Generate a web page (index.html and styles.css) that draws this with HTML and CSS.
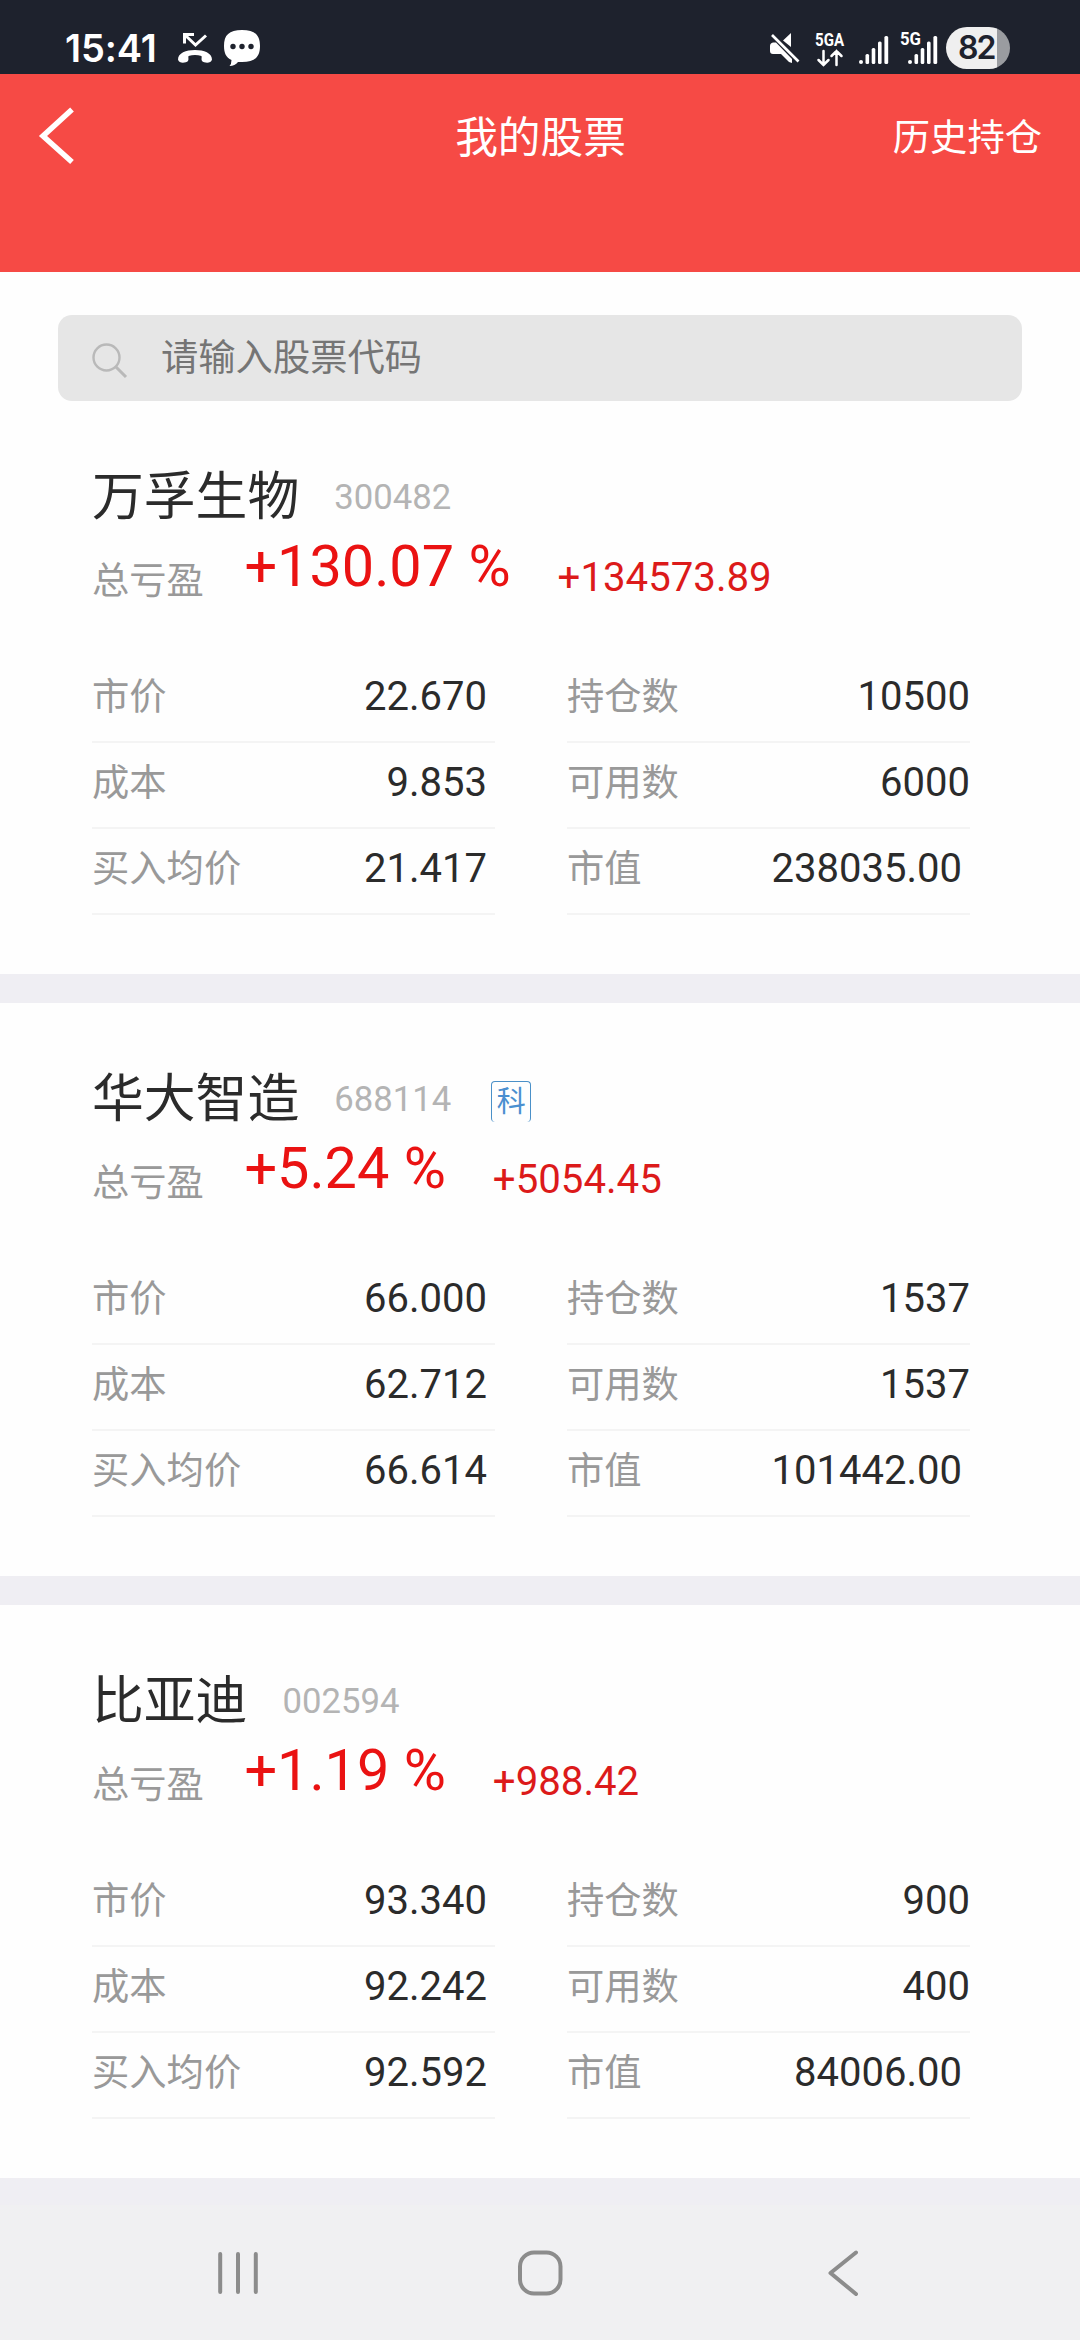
FILE: index.html
```html
<!DOCTYPE html>
<html lang="zh-CN">
<head>
<meta charset="utf-8">
<title>我的股票</title>
<link rel="stylesheet" href="styles.css">
</head>
<body>
<div class="status-bar">
  <span class="clock">15:41</span>
  <svg class="ic-missed" width="36" height="32" viewBox="0 0 36 32"><path d="M7.500 11.500V2.500H17M8 3L18.500 13L29 3.500" fill="none" stroke="#fff" stroke-width="3"/><path d="M1 27.500C1 21 9 18 18 18S35 21 35 27.500C34 32 27 31 25 29C24 27.500 25 25.500 24.500 24C20 22.500 16 22.500 11.500 24C11 25.500 12 27.500 11 29C9 31 2 32 1 27.500Z" fill="#fff"/></svg>
  <svg class="ic-chat" width="36" height="38" viewBox="0 0 36 38"><path d="M18 1C31 1 36 6 36 17S31 33 18 33L14 33C12 35.500 9 37 5.500 37Q7.500 35 7.500 31C2 28.500 0 24 0 17C0 6 5 1 18 1Z" fill="#fff"/><circle cx="9" cy="17.500" r="2.700" fill="#1e222d"/><circle cx="18" cy="17.500" r="2.700" fill="#1e222d"/><circle cx="27" cy="17.500" r="2.700" fill="#1e222d"/></svg>
  <svg class="ic-mute" width="30" height="32" viewBox="0 0 30 32"><path d="M0 14Q0 11 3 10.500H6L22 27V31L19 30L11 22H3Q0 22 0 19ZM21 1V15L13 8.500Z" fill="#fff"/><path d="M2 3L28.500 29.500" stroke="#fff" stroke-width="2.600"/></svg>
  <svg class="ic-5ga" width="30" height="36" viewBox="0 0 30 36"><text class="net" x="0" y="15" textLength="29" lengthAdjust="spacingAndGlyphs">5GA</text><path d="M8.500 20V34M3.500 29L8.500 34L13.500 29M21.500 34V20M16.500 25L21.500 20L26.500 25" fill="none" stroke="#fff" stroke-width="2.500" stroke-linecap="round"/></svg>
  <svg class="ic-signal" width="30" height="30" viewBox="0 0 30 30"><g fill="#fff"><circle cx="2" cy="27" r="2"/><rect x="6.500" y="19" width="3.600" height="10" rx="1.500"/><rect x="12.700" y="13" width="3.600" height="16" rx="1.500"/><rect x="19" y="6.500" width="3.600" height="22.500" rx="1.500"/><rect x="25.400" y="1" width="3.800" height="28" rx="1.500"/></g></svg>
  <svg class="ic-5g" width="39" height="36" viewBox="0 0 39 36"><text class="net" x="0" y="15" textLength="21" lengthAdjust="spacingAndGlyphs">5G</text><g fill="#fff"><circle cx="10" cy="32" r="2"/><rect x="14.500" y="24" width="3.600" height="10" rx="1.500"/><rect x="20.700" y="18" width="3.600" height="16" rx="1.500"/><rect x="27" y="11.500" width="3.600" height="22.500" rx="1.500"/><rect x="33.400" y="6" width="3.800" height="28" rx="1.500"/></g></svg>
  <span class="battery">82</span>
</div>
<header class="header">
  <svg class="back" width="36" height="58" viewBox="0 0 36 58"><path d="M33 2.500L4 29L33 55" fill="none" stroke="#fff" stroke-width="5.500"/></svg>
  <h1 class="title">我的股票</h1>
  <a class="history">历史持仓</a>
</header>
<main>
  <div class="search">
    <svg width="36" height="36" viewBox="0 0 36 36" fill="none" stroke="#b9b9b9" stroke-width="2.400"><circle cx="14.500" cy="14.500" r="13"/><path d="M24 24L34 34" stroke-width="3"/></svg>
    <span>请输入股票代码</span>
  </div>
  <section class="stock">
    <div class="heading"><h2>万孚生物</h2><span class="code">300482</span></div>
    <div class="profit"><span class="caption">总亏盈</span><span class="pct">+130.07 %</span><span class="amount">+134573.89</span></div>
    <div class="figures">
      <dl><div><dt>市价</dt><dd>22.670</dd></div><div><dt>成本</dt><dd>9.853</dd></div><div><dt>买入均价</dt><dd>21.417</dd></div></dl>
      <dl class="holding"><div><dt>持仓数</dt><dd>10500</dd></div><div><dt>可用数</dt><dd>6000</dd></div><div><dt>市值</dt><dd class="inset">238035.00</dd></div></dl>
    </div>
  </section>
  <section class="stock">
    <div class="heading"><h2>华大智造</h2><span class="code">688114</span><span class="tag">科</span></div>
    <div class="profit"><span class="caption">总亏盈</span><span class="pct">+5.24 %</span><span class="amount">+5054.45</span></div>
    <div class="figures">
      <dl><div><dt>市价</dt><dd>66.000</dd></div><div><dt>成本</dt><dd>62.712</dd></div><div><dt>买入均价</dt><dd>66.614</dd></div></dl>
      <dl class="holding"><div><dt>持仓数</dt><dd>1537</dd></div><div><dt>可用数</dt><dd>1537</dd></div><div><dt>市值</dt><dd class="inset">101442.00</dd></div></dl>
    </div>
  </section>
  <section class="stock">
    <div class="heading"><h2>比亚迪</h2><span class="code">002594</span></div>
    <div class="profit"><span class="caption">总亏盈</span><span class="pct">+1.19 %</span><span class="amount">+988.42</span></div>
    <div class="figures">
      <dl><div><dt>市价</dt><dd>93.340</dd></div><div><dt>成本</dt><dd>92.242</dd></div><div><dt>买入均价</dt><dd>92.592</dd></div></dl>
      <dl class="holding"><div><dt>持仓数</dt><dd>900</dd></div><div><dt>可用数</dt><dd>400</dd></div><div><dt>市值</dt><dd class="inset">84006.00</dd></div></dl>
    </div>
  </section>
</main>
<nav class="nav">
  <svg width="48" height="48" viewBox="0 0 48 48"><path d="M6.200 5V43M24 5V43M41.800 5V43" stroke="#8c8c8c" stroke-width="4" stroke-linecap="round"/></svg>
  <svg width="48" height="48" viewBox="0 0 48 48"><rect x="4" y="3.500" width="40.500" height="41" rx="14" fill="none" stroke="#8c8c8c" stroke-width="4"/></svg>
  <svg width="48" height="48" viewBox="0 0 48 48"><path d="M38 3.500L12.500 24L38 45" fill="none" stroke="#8c8c8c" stroke-width="4" stroke-linecap="round" stroke-linejoin="round"/></svg>
</nav>
</body>
</html>
```

FILE: styles.css
```css
* { box-sizing: border-box; margin: 0; padding: 0; }
body {
  width: 1080px;
  height: 2340px;
  overflow: hidden;
  display: flex;
  flex-direction: column;
  background: #f0f0f2;
  color: #2b2b2b;
  font-family: Roboto, "Noto Sans CJK SC", sans-serif;
}
svg { display: block; flex: none; overflow: visible; }

.status-bar {
  height: 74px;
  padding: 22px 70px 0 65px;
  display: flex;
  align-items: center;
  background: #1e222d;
  color: #fff;
}
.clock { width: 94px; font: 600 38px/52px Inter, sans-serif; letter-spacing: -0.1px; white-space: nowrap; }
.ic-missed { margin-left: 18px; }
.ic-chat { margin-left: 11px; }
.ic-mute { margin-left: auto; }
.ic-5ga { margin-left: 15px; margin-top: 2px; }
.ic-signal { margin-left: 14px; margin-top: 3px; }
.ic-5g { margin-left: 11px; }
.net { font: 700 18.500px/1 Roboto, sans-serif; fill: #fff; }
.battery {
  width: 64px;
  height: 42px;
  margin-left: 7px;
  padding-left: 12px;
  border-radius: 21px;
  background: linear-gradient(90deg, #efefef 51px, #9a9ca0 51px);
  color: #1e222d;
  font: 600 32px/42px Inter, sans-serif;
  letter-spacing: -2px;
}

.header {
  height: 198px;
  padding: 0 38px 0 39px;
  display: grid;
  grid-template-columns: 1fr auto 1fr;
  align-items: start;
  background: #f64a45;
  color: #fff;
}
.back { margin-top: 33px; }
.title { font-size: 42.7px; font-weight: 400; line-height: 128px; }
.history { justify-self: end; font-size: 37.3px; line-height: 129px; }

main { background: #fefefe; }
.search {
  height: 86px;
  margin: 43px 58px 0;
  padding: 0 34px;
  display: flex;
  align-items: center;
  gap: 33px;
  border-radius: 14px;
  background: #e6e6e6;
  color: #757575;
  font-size: 37.3px;
}
.search svg { margin-top: 6px; }
.search span { line-height: 84px; padding-bottom: 1px; }

.stock {
  height: 602px;
  padding: 63px 110px 0 92px;
  border-bottom: 29px solid #efeef3;
}
.stock:last-child { height: 600px; border-bottom-width: 27px; }
.heading { display: flex; align-items: center; height: 66px; line-height: 67px; }
.heading h2 { font-size: 51.8px; font-weight: 400; }
.code { margin-left: 35px; font-size: 34.7px; color: #b4b4b4; }
.tag {
  width: 40px;
  height: 41px;
  margin: 4px 0 0 40px;
  border: 1.500px solid #4a90c8;
  border-bottom: 0;
  border-radius: 4px;
  color: #4a8fd0;
  font-size: 29px;
  line-height: 41px;
  text-align: center;
}
.profit { display: flex; height: 66px; margin-top: 3px; line-height: 67px; white-space: nowrap; }
.caption { margin-top: 15px; font-size: 37.3px; color: #999; }
.pct { margin-left: 40.500px; font-size: 57.6px; color: #ea1212; }
.amount { margin: 11px 0 0 47px; font-size: 40.2px; color: #dc1a1a; }
.figures { display: grid; grid-template-columns: 403px 403px; gap: 72px; margin-top: 58px; }
.figures dl > div {
  height: 86px;
  padding: 0 8px 4px 0;
  display: flex;
  justify-content: space-between;
  align-items: center;
  border-bottom: 2px solid #f4f4f4;
  line-height: 80px;
}
.figures .holding > div { padding-right: 0; }
.figures dt { font-size: 37.3px; color: #999; }
.figures dd { font-size: 40px; }
.figures .inset { padding-right: 8px; }

.nav {
  flex: 1;
  padding: 0 214px;
  display: flex;
  justify-content: space-between;
  align-items: center;
}
```
